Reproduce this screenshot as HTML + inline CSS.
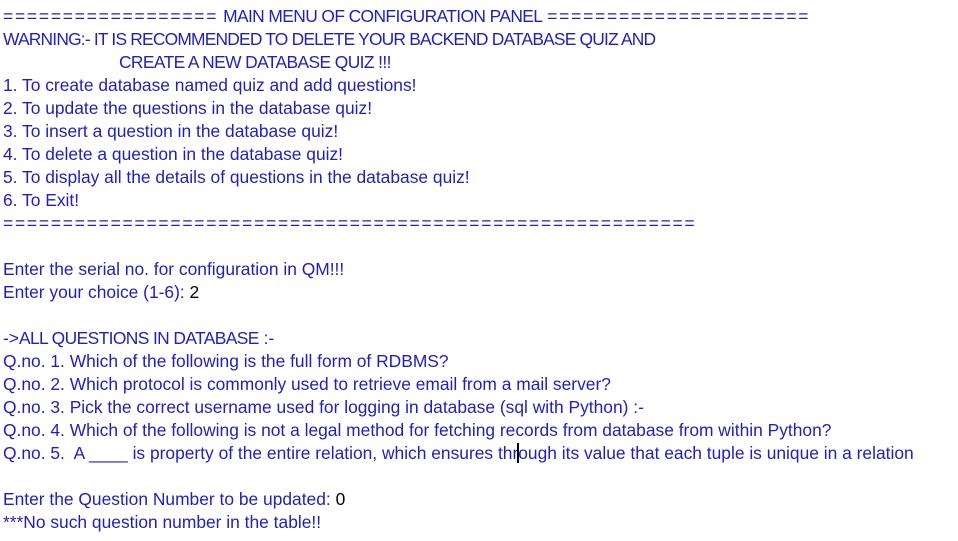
<!DOCTYPE html>
<html><head><meta charset="utf-8"><style>
html,body{margin:0;padding:0;background:#fff;width:958px;height:541px;overflow:hidden}
pre{margin:0;padding:5px 0 0 3px;font-family:"Liberation Sans",sans-serif;font-size:17.4px;line-height:23px;color:#1f1fbf;white-space:pre}
.e{letter-spacing:1.8px}
.u{letter-spacing:-0.6px}
.w{letter-spacing:-0.8px}
.k{color:#000}
.cur{display:inline-block;width:2px;height:20px;background:#000;vertical-align:-4px;margin:0 -1px}
</style></head><body><pre><span class="e">==================</span> <span class="u">MAIN MENU OF CONFIGURATION PANEL</span> <span class="e">======================</span>
<span class="w">WARNING:- IT IS RECOMMENDED TO DELETE YOUR BACKEND DATABASE QUIZ AND</span>
                        <span class="u">CREATE A NEW DATABASE QUIZ !!!</span>
1. To create database named quiz and add questions!
2. To update the questions in the database quiz!
3. To insert a question in the database quiz!
4. To delete a question in the database quiz!
5. To display all the details of questions in the database quiz!
6. To Exit!
<span class="e">==========================================================</span>

Enter the serial no. for configuration in QM!!!
Enter your choice (1-6): <span class="k">2</span>

-&gt;<span class="u">ALL QUESTIONS IN DATABASE</span> :-
Q.no. 1. Which of the following is the full form of RDBMS?
Q.no. 2. Which protocol is commonly used to retrieve email from a mail server?
Q.no. 3. Pick the correct username used for logging in database (sql with Python) :-
Q.no. 4. Which of the following is not a legal method for fetching records from database from within Python?
Q.no. 5.  A ____ is property of the entire relation, which ensures thr<span class="cur"></span>ough its value that each tuple is unique in a relation

Enter the Question Number to be updated: <span class="k">0</span>
***No such question number in the table!!</pre></body></html>
